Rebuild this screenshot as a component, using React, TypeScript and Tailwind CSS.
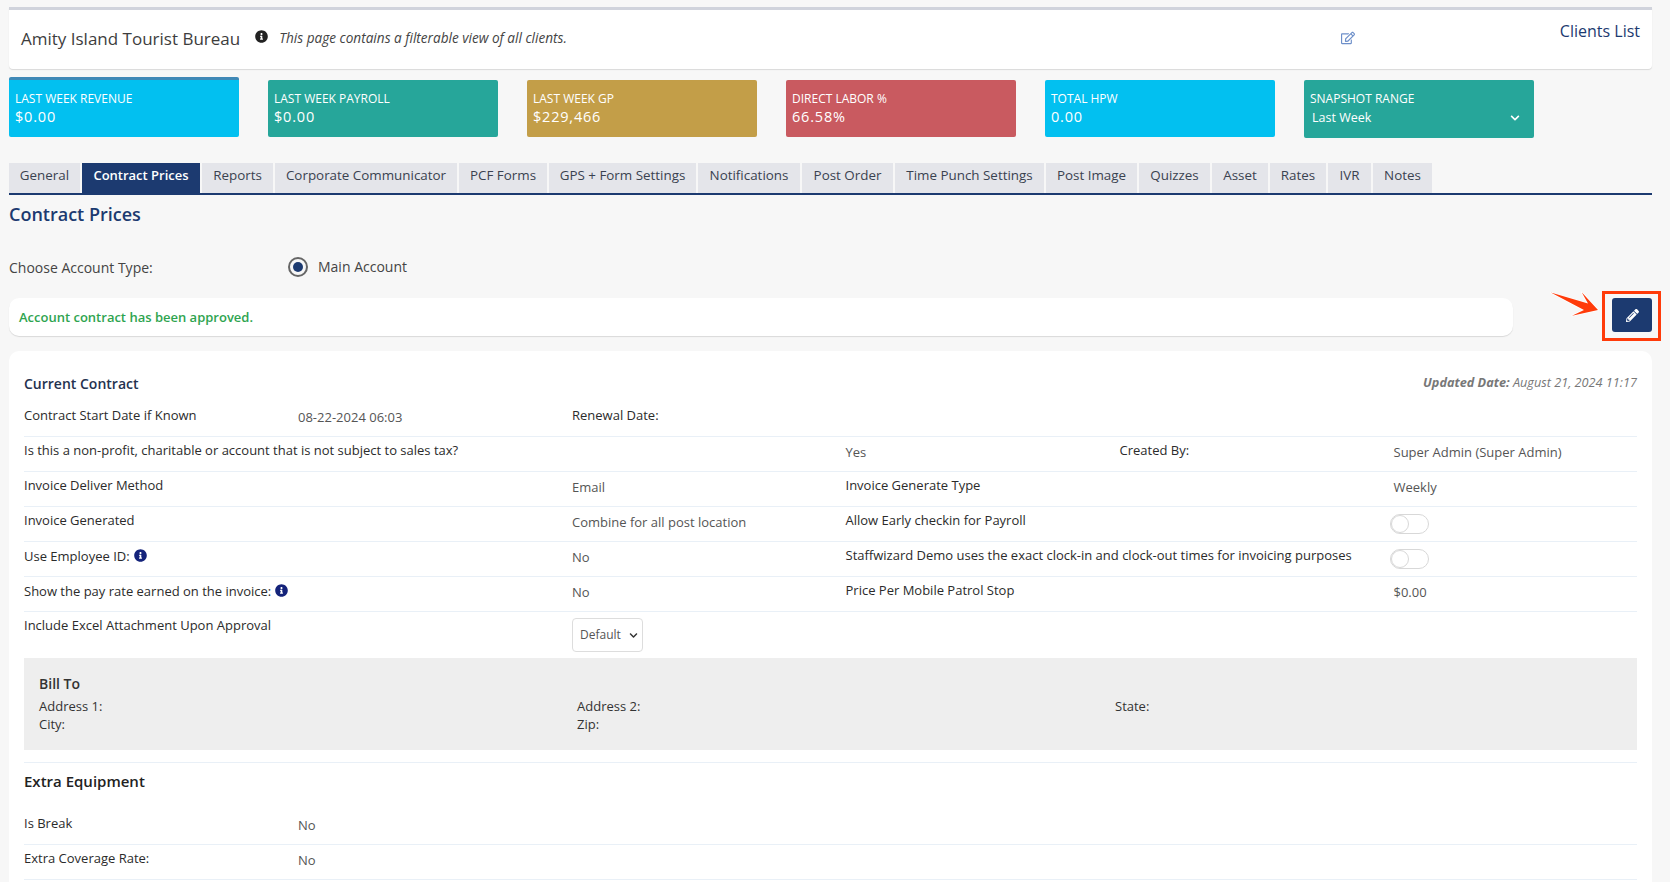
import React from 'react';
import { FaInfoCircle, FaPencilAlt, FaRegEdit, FaChevronDown } from 'react-icons/fa';

const statCards = [
  { label: 'LAST WEEK REVENUE', value: '$0.00', color: 'bg-[#02c0f0]', first: true },
  { label: 'LAST WEEK PAYROLL', value: '$0.00', color: 'bg-[#26a69a]' },
  { label: 'LAST WEEK GP', value: '$229,466', color: 'bg-[#c39e48]' },
  { label: 'DIRECT LABOR %', value: '66.58%', color: 'bg-[#c95a60]' },
  { label: 'TOTAL HPW', value: '0.00', color: 'bg-[#02c0f0]' },
];

const tabs = [
  { name: 'General', w: 'w-[71px]' },
  { name: 'Contract Prices', w: 'w-[118px]', active: true },
  { name: 'Reports', w: 'w-[71px]' },
  { name: 'Corporate Communicator', w: 'w-[182px]' },
  { name: 'PCF Forms', w: 'w-[88px]' },
  { name: 'GPS + Form Settings', w: 'w-[147px]' },
  { name: 'Notifications', w: 'w-[102px]' },
  { name: 'Post Order', w: 'w-[91px]' },
  { name: 'Time Punch Settings', w: 'w-[149px]' },
  { name: 'Post Image', w: 'w-[91px]' },
  { name: 'Quizzes', w: 'w-[71px]' },
  { name: 'Asset', w: 'w-[56px]' },
  { name: 'Rates', w: 'w-[56px]' },
  { name: 'IVR', w: 'w-[43px]' },
  { name: 'Notes', w: 'w-[59px]' },
];

function Label({ children, span }: { children: React.ReactNode; span?: string }) {
  return <div className={`pt-[3px] text-[13px] leading-[20px] text-[#2b2b2b] ${span ?? ''}`}>{children}</div>;
}

function Value({ children }: { children?: React.ReactNode }) {
  return <div className="pt-[5px] text-[13px] leading-[20px] text-[#555]">{children}</div>;
}

function Row({ children }: { children: React.ReactNode }) {
  return (
    <div className="grid h-[35px] grid-cols-[274px_274px_273.5px_274px_274px_1fr] border-b border-[#e9f0f7]">
      {children}
    </div>
  );
}

function Toggle() {
  return (
    <div className="-ml-[4px] mt-[7px] h-[20px] w-[39px] rounded-full border border-[#d8d8d8] bg-white">
      <div className="h-[18px] w-[18px] rounded-full border border-[#d8d8d8] bg-white" />
    </div>
  );
}

function InfoLabel({ text }: { text: string }) {
  return (
    <div className="col-span-2 pt-[4px] text-[13px] leading-[20px] text-[#2b2b2b]">
      {text}
      <FaInfoCircle className="ml-[4px] inline-block align-[-1px] text-[13px] text-[#14237a]" />
    </div>
  );
}

export default function App() {
  return (
    <div className="h-[882px] w-[1670px] overflow-hidden bg-[#f7f7f7] pl-[9px] pt-[7px] font-['Open_Sans',sans-serif]">
      <div className="w-[1643px]">
        {/* Header */}
        <div className="flex h-[62px] items-start rounded-b border-t-[3px] border-[#d0d3dc] bg-white pl-[12px] pr-[12px] shadow-[0_1px_1px_rgba(0,0,0,0.12)]">
          <div className="mt-[17px] text-[17px] leading-[24px] text-[#3d3d3d]">Amity Island Tourist Bureau</div>
          <FaInfoCircle className="ml-[15px] mt-[20px] text-[13px] text-[#222]" />
          <div className="ml-[11px] mt-[18px] text-[13.6px] italic leading-[20px] text-[#444]">
            This page contains a filterable view of all clients.
          </div>
          <FaRegEdit className="ml-[774px] mt-[21px] text-[14px] text-[#6d8fc9]" />
          <div className="ml-auto mt-[9px] text-[16px] leading-[24px] text-[#1c3a70]">Clients List</div>
        </div>

        {/* Stats */}
        <div className="mt-[8px] flex h-[61px] items-start gap-[29px]">
          {statCards.map((c) => (
            <div
              key={c.label}
              className={`w-[230px] rounded-[2px] pl-[6px] text-white ${c.color} ${
                c.first ? 'h-[60px] border-t-[3px] border-[#3f88b6]' : 'mt-[3px] h-[57px]'
              }`}
            >
              <div className="pt-[9px] text-[12px] leading-[20px]">{c.label}</div>
              <div className="-mt-[2px] text-[14.5px] leading-[20px] tracking-[0.8px]">{c.value}</div>
            </div>
          ))}
          <div className="mt-[3px] h-[58px] w-[230px] rounded-[2px] bg-[#26a69a] pl-[6px] text-white">
            <div className="pt-[9px] text-[12px] leading-[20px]">SNAPSHOT RANGE</div>
            <div className="-mt-[1px] flex items-center justify-between pl-[2px] pr-[14px] text-[12.5px] leading-[20px]">
              <span>Last Week</span>
              <FaChevronDown className="text-[10px]" />
            </div>
          </div>
        </div>

        {/* Tabs */}
        <div className="mt-[25px] flex h-[32px] gap-[2px] border-b-2 border-[#1c3a70]">
          {tabs.map((t) => (
            <div
              key={t.name}
              className={`flex h-[30px] items-center justify-center pb-[5px] ${t.w} ${
                t.active ? 'bg-[#1c3a70] text-[13px] font-semibold text-white' : 'bg-[#e4e5ea] text-[13.4px] text-[#3a4250]'
              }`}
            >
              {t.name}
            </div>
          ))}
        </div>

        <h2 className="mt-[7px] text-[18px] font-semibold leading-[24px] text-[#1c3a70]">Contract Prices</h2>

        {/* Account type */}
        <div className="mt-[31px] flex h-[20px] items-center text-[14px] text-[#444]">
          <div className="w-[279px]">Choose Account Type:</div>
          <div className="-mt-[1px] flex h-[20px] w-[20px] items-center justify-center rounded-full border-[2.5px] border-[#666]">
            <div className="h-[10px] w-[10px] rounded-full bg-[#1c3a70]" />
          </div>
          <div className="-mt-[2px] ml-[10px]">Main Account</div>
        </div>

        {/* Approved notice */}
        <div className="mt-[21px] flex items-start justify-between">
          <div className="flex h-[38px] w-[1504px] items-center rounded-[10px] bg-white pl-[10px] pt-[1px] text-[13px] font-semibold text-[#2ea44f] shadow-[0_1px_1px_rgba(0,0,0,0.12)]">
            Account contract has been approved.
          </div>
          <button className="relative flex h-[34px] w-[40px] items-center justify-center rounded-[3px] bg-[#1c3a70] text-white">
            <FaPencilAlt className="text-[13px]" />
            <span className="absolute -left-[10px] -top-[7px] h-[50px] w-[59px] border-[3px] border-[#ff3b0a]" />
            <svg className="absolute -left-[62px] -top-[7px]" width="50" height="27" viewBox="0 0 50 27">
              <path
                d="M0.8 1.6 L38 12.6 L31.7 1.3 L48 19 L22 24.7 L34 19 Z"
                fill="#ff3b0a"
                stroke="#fff"
                strokeWidth="1.5"
                strokeLinejoin="round"
                paintOrder="stroke"
              />
            </svg>
          </button>
        </div>

        {/* Contract card */}
        <div className="mt-[15px] h-[560px] rounded-[10px] bg-white pl-[15px] pr-[15px] pt-[22px]">
          <div className="flex h-[20px] items-center justify-between">
            <div className="text-[14px] font-semibold text-[#24324f]">Current Contract</div>
            <div className="text-[12.7px] italic text-[#777]">
              <span className="font-bold">Updated Date:</span> August 21, 2024 11:17
            </div>
          </div>

          <div className="mt-[9px]">
            <Row>
              <Label>Contract Start Date if Known</Label>
              <Value>08-22-2024 06:03</Value>
              <Label>Renewal Date:</Label>
            </Row>
            <Row>
              <Label span="col-span-3">Is this a non-profit, charitable or account that is not subject to sales tax?</Label>
              <Value>Yes</Value>
              <Label>Created By:</Label>
              <Value>Super Admin (Super Admin)</Value>
            </Row>
            <Row>
              <Label span="col-span-2">Invoice Deliver Method</Label>
              <Value>Email</Value>
              <Label span="col-span-2">Invoice Generate Type</Label>
              <Value>Weekly</Value>
            </Row>
            <Row>
              <Label span="col-span-2">Invoice Generated</Label>
              <Value>Combine for all post location</Value>
              <Label span="col-span-2">Allow Early checkin for Payroll</Label>
              <Toggle />
            </Row>
            <Row>
              <InfoLabel text="Use Employee ID:" />
              <Value>No</Value>
              <Label span="col-span-2">Staffwizard Demo uses the exact clock-in and clock-out times for invoicing purposes</Label>
              <Toggle />
            </Row>
            <Row>
              <InfoLabel text="Show the pay rate earned on the invoice:" />
              <Value>No</Value>
              <Label span="col-span-2">Price Per Mobile Patrol Stop</Label>
              <Value>$0.00</Value>
            </Row>
            <div className="grid h-[46px] grid-cols-[548px_1fr]">
              <Label>Include Excel Attachment Upon Approval</Label>
              <div className="pt-[6px]">
                <div className="flex h-[34px] w-[71px] items-center justify-between rounded-[4px] border border-[#ddd] pl-[7px] pr-[4px] text-[12px] text-[#555]">
                  <span>Default</span>
                  <FaChevronDown className="text-[9px] text-[#333]" />
                </div>
              </div>
            </div>
          </div>

          {/* Bill To */}
          <div className="h-[92px] bg-[#eeeeee] pl-[15px] pt-[16px] text-[13px] text-[#333]">
            <div className="text-[14px] font-semibold leading-[20px]">Bill To</div>
            <div className="mt-[3px] grid grid-cols-[538px_538px_1fr] leading-[18px]">
              <div>Address 1:</div>
              <div>Address 2:</div>
              <div>State:</div>
              <div>City:</div>
              <div>Zip:</div>
            </div>
          </div>

          <div className="mt-[12px] border-t border-[#e9f0f7] pt-[7px] text-[15px] font-semibold leading-[22px] text-[#222]">
            Extra Equipment
          </div>

          <div className="mt-[18px]">
            <Row>
              <Label>Is Break</Label>
              <Value>No</Value>
            </Row>
            <Row>
              <Label>Extra Coverage Rate:</Label>
              <Value>No</Value>
            </Row>
          </div>
        </div>
      </div>
    </div>
  );
}
